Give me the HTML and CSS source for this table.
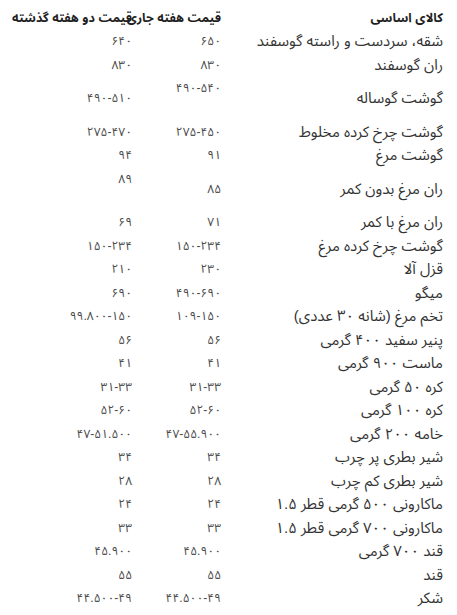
FILE: index.html
```html
<!DOCTYPE html>
<html lang="fa" dir="rtl">
<head>
<meta charset="utf-8">
<title>قیمت کالاهای اساسی</title>
<link rel="stylesheet" href="styles.css">
</head>
<body>
<table class="prices">
  <colgroup>
    <col class="c-name">
    <col class="c-now">
    <col class="c-prev">
  </colgroup>
  <thead>
    <tr><th>کالای اساسی</th><th>قیمت هفته جاری</th><th>قیمت دو هفته گذشته</th></tr>
  </thead>
  <tbody>
    <tr><td>شقه، سردست و راسته گوسفند</td><td>۶۵۰</td><td>۶۴۰</td></tr>
    <tr><td>ران گوسفند</td><td>۸۳۰</td><td>۸۳۰</td></tr>
    <tr><td>گوشت گوساله</td><td class="top">۴۹۰-۵۴۰<br>&nbsp;</td><td>۴۹۰-۵۱۰</td></tr>
    <tr><td>گوشت چرخ کرده مخلوط</td><td>۲۷۵-۴۵۰</td><td>۲۷۵-۴۷۰</td></tr>
    <tr><td>گوشت مرغ</td><td>۹۱</td><td>۹۴</td></tr>
    <tr><td>ران مرغ بدون کمر</td><td>۸۵</td><td class="top">۸۹<br>&nbsp;</td></tr>
    <tr><td>ران مرغ با کمر</td><td>۷۱</td><td>۶۹</td></tr>
    <tr><td>گوشت چرخ کرده مرغ</td><td>۱۵۰-۲۳۴</td><td>۱۵۰-۲۳۴</td></tr>
    <tr><td>قزل آلا</td><td>۲۳۰</td><td>۲۱۰</td></tr>
    <tr><td>میگو</td><td>۴۹۰-۶۹۰</td><td>۶۹۰</td></tr>
    <tr><td>تخم مرغ (شانه ۳۰ عددی)</td><td>۱۰۹-۱۵۰</td><td>۹۹.۸۰۰-۱۵۰</td></tr>
    <tr><td>پنیر سفید ۴۰۰ گرمی</td><td>۵۶</td><td>۵۶</td></tr>
    <tr><td>ماست ۹۰۰ گرمی</td><td>۴۱</td><td>۴۱</td></tr>
    <tr><td>کره ۵۰ گرمی</td><td>۳۱-۳۳</td><td>۳۱-۳۳</td></tr>
    <tr><td>کره ۱۰۰ گرمی</td><td>۵۲-۶۰</td><td>۵۲-۶۰</td></tr>
    <tr><td>خامه ۲۰۰ گرمی</td><td>۴۷-۵۵.۹۰۰</td><td>۴۷-۵۱.۵۰۰</td></tr>
    <tr><td>شیر بطری پر چرب</td><td>۳۴</td><td>۳۴</td></tr>
    <tr><td>شیر بطری کم چرب</td><td>۲۸</td><td>۲۸</td></tr>
    <tr><td>ماکارونی ۵۰۰ گرمی قطر ۱.۵</td><td>۲۴</td><td>۲۴</td></tr>
    <tr><td>ماکارونی ۷۰۰ گرمی قطر ۱.۵</td><td>۳۳</td><td>۳۳</td></tr>
    <tr><td>قند ۷۰۰ گرمی</td><td>۴۵.۹۰۰</td><td>۴۵.۹۰۰</td></tr>
    <tr><td>قند</td><td>۵۵</td><td>۵۵</td></tr>
    <tr><td>شکر</td><td>۴۴.۵۰۰-۴۹</td><td>۴۴.۵۰۰-۴۹</td></tr>
  </tbody>
</table>
</body>
</html>
```
FILE: styles.css
```css
html, body {
  margin: 0;
  padding: 0;
  background: #ffffff;
}

body {
  direction: rtl;
  font-family: "Liberation Sans", "Noto Sans Arabic", "DejaVu Sans", sans-serif;
  font-size: 14px;
  color: #333333;
}

.prices {
  width: 424px;
  margin: 6px 14px 0 0;
  border-collapse: collapse;
  table-layout: fixed;
}

.c-name { width: 222px; }
.c-now { width: 89px; }
.c-prev { width: 113px; }

.prices th,
.prices td {
  padding: 1.75px 0;
  height: 20px;
  line-height: 20px;
  text-align: right;
  vertical-align: middle;
  white-space: nowrap;
}

.prices th {
  font-size: 12.5px;
  font-weight: bold;
  color: #1f1f1f;
}

.prices td:first-child {
  font-size: 15px;
}

.prices td:not(:first-child) {
  color: #4a4a4a;
  font-size: 12px;
}

.prices td.top {
  vertical-align: top;
}
```
